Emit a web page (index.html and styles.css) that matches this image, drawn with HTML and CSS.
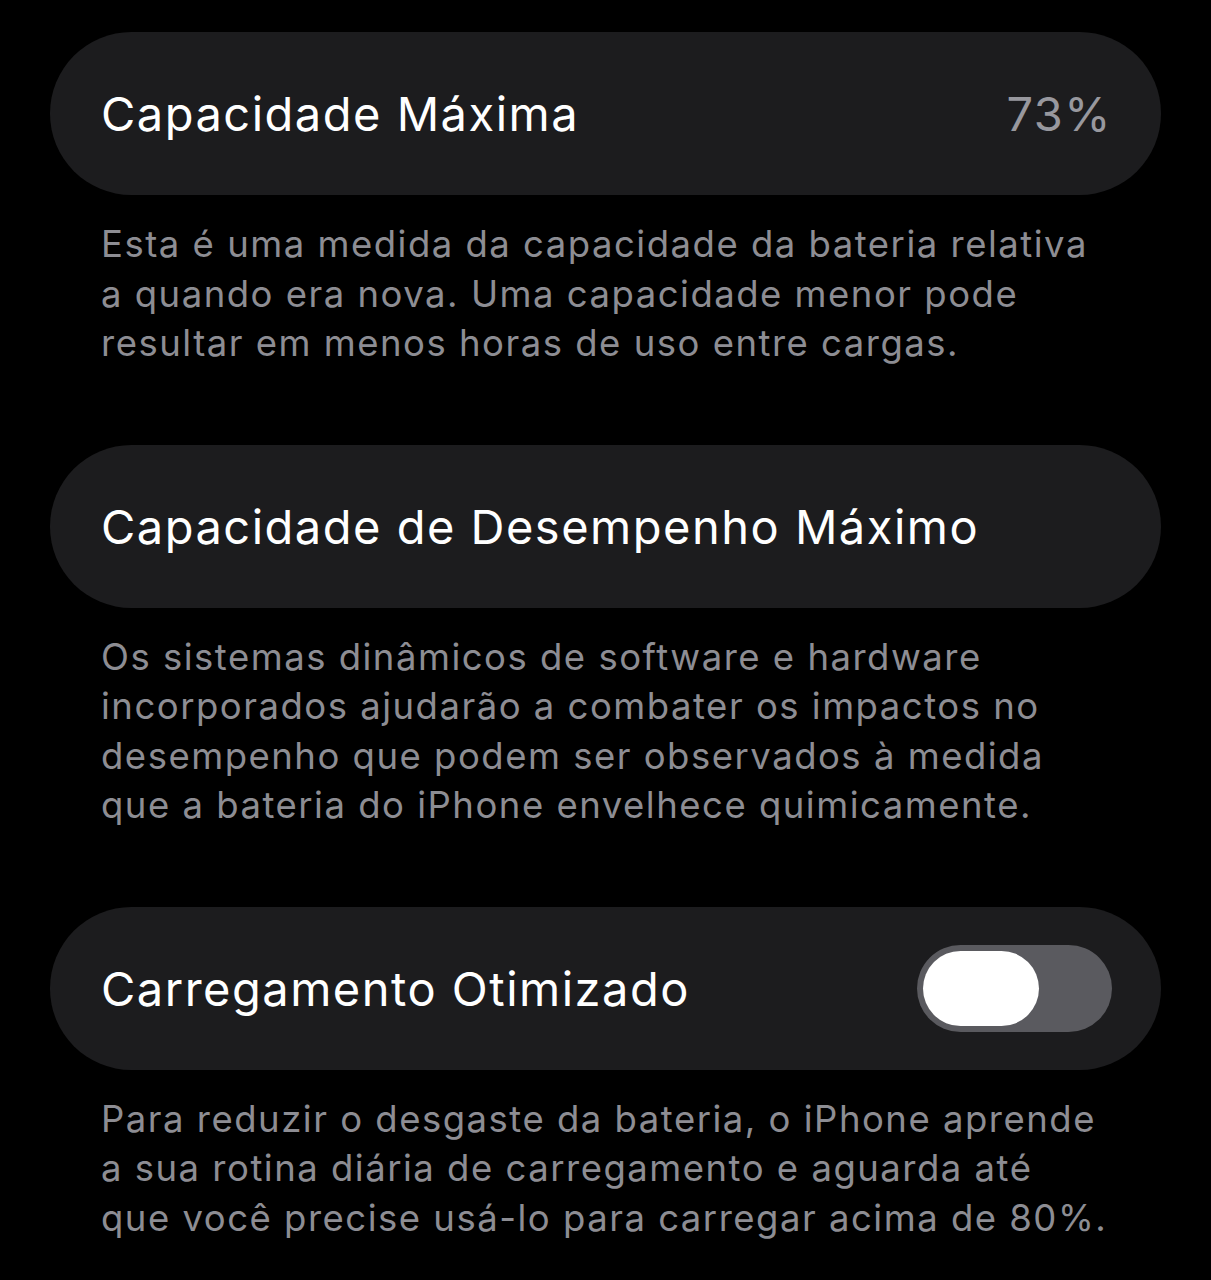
FILE: index.html
```html
<!DOCTYPE html>
<html lang="pt-BR">
<head>
    <meta charset="UTF-8">
    <meta name="viewport" content="width=device-width, initial-scale=1.0">
    <title>Saúde da Bateria</title>
    <link rel="stylesheet" href="styles.css">
</head>
<body>
    <div class="group">
        <div class="cell">
            <span class="label">Capacidade Máxima</span>
            <span class="value">73%</span>
        </div>
        <p class="footer">Esta é uma medida da capacidade da bateria relativa<br>a quando era nova. Uma capacidade menor pode<br>resultar em menos horas de uso entre cargas.</p>
    </div>

    <div class="group">
        <div class="cell">
            <span class="label">Capacidade de Desempenho Máximo</span>
        </div>
        <p class="footer">Os sistemas dinâmicos de software e hardware<br>incorporados ajudarão a combater os impactos no<br>desempenho que podem ser observados à medida<br>que a bateria do iPhone envelhece quimicamente.</p>
    </div>

    <div class="group">
        <div class="cell">
            <span class="label">Carregamento Otimizado</span>
            <div class="switch"><div class="knob"></div></div>
        </div>
        <p class="footer">Para reduzir o desgaste da bateria, o iPhone aprende<br>a sua rotina diária de carregamento e aguarda até<br>que você precise usá-lo para carregar acima de 80%.</p>
    </div>
</body>
</html>
```

FILE: styles.css
```css
body { margin: 0; padding: 32px 50px 0; background: #000; font-family: Inter, "Noto Sans", sans-serif; }
.group { margin-bottom: 76px; }
.cell { display: flex; justify-content: space-between; align-items: center; height: 163px; padding: 0 49px 0 51px; background: #1c1c1e; border-radius: 82px; }
.label { color: #fff; font-size: 47px; letter-spacing: 1.5px; }
.value { color: #98989e; font-size: 47px; letter-spacing: 1.5px; }
.footer { margin: 0; padding: 25px 51px 0; color: #8d8d93; font-size: 36.5px; letter-spacing: 1.5px; line-height: 49.5px; white-space: nowrap; }
.switch { display: flex; align-items: center; width: 195px; height: 87px; padding: 0 6px; box-sizing: border-box; background: #5a5a5f; border-radius: 44px; }
.knob { width: 116px; height: 75px; background: #fff; border-radius: 38px; }
```
